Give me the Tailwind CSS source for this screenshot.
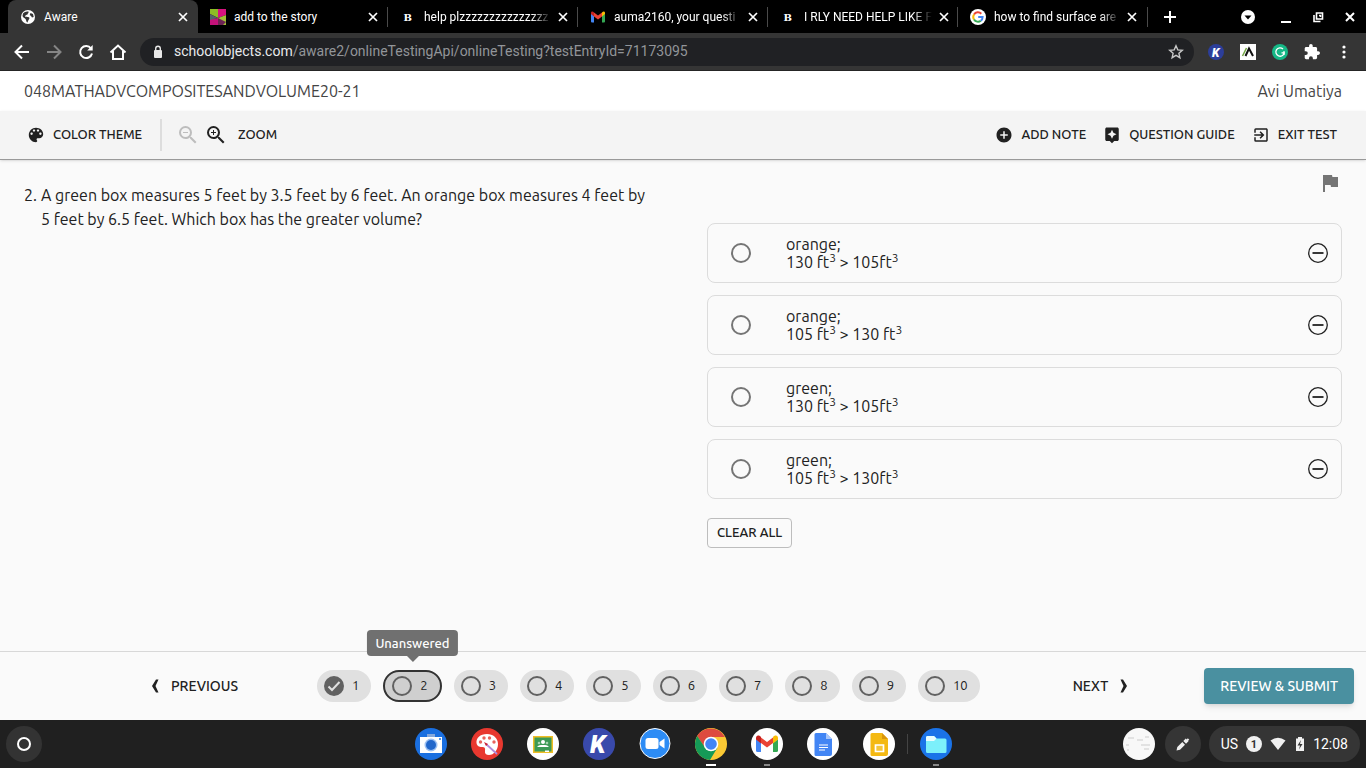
<!DOCTYPE html>
<html lang="en">
    <head>
        <meta charset="utf-8">
        <title>Aware</title>
        <script src="https://cdn.jsdelivr.net/npm/@tailwindcss/browser@4"></script>
    </head>
    <body class="min-h-screen w-full flex flex-col bg-[#fafafa] text-[#212121] font-['Ubuntu','Noto_Sans',sans-serif]">

        <!-- browser chrome -->
        <div class="bg-black text-white font-['Roboto',sans-serif]">
            <div class="flex items-center h-[33px] pl-2 text-[12px]">
                <div class="flex-1 max-w-[190px] h-full flex items-center pl-3 pr-[7px] gap-2 bg-[#353535] rounded-t-lg">
                    <svg class="size-4 shrink-0" viewBox="0 0 16 16"><circle cx="8" cy="8" r="7" fill="#fff"/><path d="M3 4.500C5 2.500 7 2.500 8.500 2.500 9 4 7.500 4.500 7.500 5.500 6.500 6 5 6 5 7.500 6 8 9 7.500 9.500 9 9.500 10 8 11 7.500 13.500 6 13 6.500 11 5.500 10 4.500 9 3 8.500 2.500 7ZM10.500 4 13 5 13.700 8 12 8.500 11 7 9.700 6Z" fill="#353535"/></svg>
                    <span class="flex-1 truncate">Aware</span>
                    <button aria-label="Close tab"><svg class="size-4" viewBox="0 0 16 16" stroke="#fff" stroke-width="1.700"><path d="M4 4l8 8M12 4l-8 8"/></svg></button>
                </div>
                <div class="flex-1 max-w-[190px] h-5 flex items-center pl-3 pr-1.5 gap-2 border-r border-[#4a4a4a]">
                    <svg class="size-4 shrink-0" viewBox="0 0 16 16"><path d="M0 0h8v9L0 5z" fill="#8dbb25"/><path d="M8 0h8v6L8 9z" fill="#d6127f"/><path d="M0 10l8-1v7H0z" fill="#c4127a"/><path d="M0 5l8 4-8 2z" fill="#55606a"/><path d="M8 9l8-3v10H8z" fill="#a0bf35"/><path d="M8 9l8 4-3 3H8z" fill="#6d2454"/></svg>
                    <span class="flex-1 whitespace-nowrap">add to the story</span>
                    <button aria-label="Close tab"><svg class="size-4" viewBox="0 0 16 16" stroke="#fff" stroke-width="1.700"><path d="M4 4l8 8M12 4l-8 8"/></svg></button>
                </div>
                <div class="flex-1 max-w-[190px] h-5 flex items-center pl-3 pr-1.5 gap-2 border-r border-[#4a4a4a]">
                    <svg class="size-4 shrink-0" viewBox="0 0 16 16"><text x="3.500" y="12" font-family="DejaVu Serif" font-size="10" font-weight="700" fill="#fff">B</text></svg>
                    <span class="flex-1 whitespace-nowrap mask-r-from-85%">help plzzzzzzzzzzzzzzz</span>
                    <button aria-label="Close tab" class="-ml-1"><svg class="size-4" viewBox="0 0 16 16" stroke="#fff" stroke-width="1.700"><path d="M4 4l8 8M12 4l-8 8"/></svg></button>
                </div>
                <div class="flex-1 max-w-[190px] h-5 flex items-center pl-3 pr-1.5 gap-2 border-r border-[#4a4a4a]">
                    <svg class="size-4 shrink-0" viewBox="0 0 16 16"><path d="M1 4.500l3 2.300V13.500H2a1 1 0 0 1-1-1z" fill="#4285f4"/><path d="M15 4.500l-3 2.300v6.700h2a1 1 0 0 0 1-1z" fill="#34a853"/><path d="M4 3.500l4 3 4-3v4l-4 3-4-3z" fill="#ea4335"/><path d="M1 5V4c0-1.500 1.700-2 3-.5v4z" fill="#c5221f"/><path d="M15 5V4c0-1.500-1.700-2-3-.5v4z" fill="#fbbc04"/></svg>
                    <span class="flex-1 whitespace-nowrap mask-r-from-85%">auma2160, your questi</span>
                    <button aria-label="Close tab" class="-ml-1"><svg class="size-4" viewBox="0 0 16 16" stroke="#fff" stroke-width="1.700"><path d="M4 4l8 8M12 4l-8 8"/></svg></button>
                </div>
                <div class="flex-1 max-w-[190px] h-5 flex items-center pl-3 pr-1.5 gap-2 border-r border-[#4a4a4a]">
                    <svg class="size-4 shrink-0" viewBox="0 0 16 16"><text x="3.500" y="12" font-family="DejaVu Serif" font-size="10" font-weight="700" fill="#fff">B</text></svg>
                    <span class="flex-1 whitespace-nowrap mask-r-from-85%">I RLY NEED HELP LIKE F</span>
                    <button aria-label="Close tab" class="-ml-1"><svg class="size-4" viewBox="0 0 16 16" stroke="#fff" stroke-width="1.700"><path d="M4 4l8 8M12 4l-8 8"/></svg></button>
                </div>
                <div class="flex-1 max-w-[190px] h-5 flex items-center pl-3 pr-[7px] gap-2 border-r border-[#4a4a4a]">
                    <svg class="size-4 shrink-0" viewBox="0 0 16 16" fill="none" stroke-width="2"><circle cx="8" cy="8" r="8" fill="#fff"/><path d="M4 5.500A4.600 4.600 0 0 1 11.300 4.800" stroke="#ea4335"/><path d="M4 5.500a4.700 4.700 0 0 0 0 5" stroke="#fbbc05"/><path d="M4 10.500a4.600 4.600 0 0 0 6.800 1.200" stroke="#34a853"/><path d="M10.800 11.700A4.600 4.600 0 0 0 12.600 8H8.200" stroke="#4285f4"/></svg>
                    <span class="flex-1 whitespace-nowrap mask-r-from-85%">how to find surface are</span>
                    <button aria-label="Close tab" class="-ml-1"><svg class="size-4" viewBox="0 0 16 16" stroke="#fff" stroke-width="1.700"><path d="M4 4l8 8M12 4l-8 8"/></svg></button>
                </div>
                <button class="ml-3.5" aria-label="New tab"><svg class="size-4" viewBox="0 0 16 16" stroke="#fff" stroke-width="2"><path d="M8 2v12M2 8h12"/></svg></button>
                <div class="ml-auto flex items-center gap-5 pr-2">
                    <button aria-label="Search tabs"><svg class="size-4" viewBox="0 0 16 16"><circle cx="8" cy="8" r="7" fill="#fff"/><path d="M4.500 6.500h7L8 10.500z" fill="#000"/></svg></button>
                    <button class="ml-0.5" aria-label="Minimize"><svg class="size-4" viewBox="0 0 16 16"><path d="M3 12h10v2H3z" fill="#fff"/></svg></button>
                    <button class="-ml-1" aria-label="Restore"><svg class="size-4" viewBox="0 0 16 16" fill="none" stroke="#fff" stroke-width="1.600"><path d="M6.500 4h6v6h-6z"/><path d="M4 6v6.500h6.500"/><path d="M9 6.500h1.500V8"/></svg></button>
                    <button class="-ml-1" aria-label="Close window"><svg class="size-4" viewBox="0 0 16 16" stroke="#fff" stroke-width="2"><path d="M4 4l8 8M12 4l-8 8"/></svg></button>
                </div>
            </div>
            <div class="flex items-center h-[38px] bg-[#353535] border-b border-[#252525] pl-3 pr-3.5">
                <div class="flex items-center gap-3 mr-3">
                    <button aria-label="Back"><svg class="size-5" viewBox="0 0 20 20" fill="none" stroke="#fff" stroke-width="2"><path d="M17 10H4M10 3.500L3.500 10l6.500 6.500"/></svg></button>
                    <button aria-label="Forward"><svg class="size-5" viewBox="0 0 20 20" fill="none" stroke="#858585" stroke-width="2"><path d="M3 10h13M10 3.500l6.500 6.500-6.500 6.500"/></svg></button>
                    <button aria-label="Reload"><svg class="size-5" viewBox="0 0 20 20" fill="none" stroke="#fff" stroke-width="2"><path d="M15 6.500A6 6 0 1 0 16 11.500"/><path d="M16.700 3v5.500h-5.500z" fill="#fff" stroke="none"/></svg></button>
                    <button aria-label="Home"><svg class="size-5" viewBox="0 0 20 20" fill="none" stroke="#fff" stroke-width="2"><path d="M2.500 10.500L10 3.500l7.500 7M5 9v8h10V9"/></svg></button>
                </div>
                <div class="flex-1 flex items-center h-7 rounded-full bg-[#202124] pl-3 pr-2.5 text-[14px]">
                    <svg class="w-3 h-4 mr-2.5" viewBox="0 0 12 16"><rect x="2" y="6" width="8" height="8" rx="1" fill="#e8e8e8"/><path d="M3.700 6V4.500a2.300 2.300 0 0 1 4.600 0V6" fill="none" stroke="#e8e8e8" stroke-width="1.400"/></svg>
                    <span class="text-[#e8eaed]">schoolobjects.com<span class="text-[#929599]">/aware2/onlineTestingApi/onlineTesting?testEntryId=71173095</span></span>
                    <button class="ml-auto" aria-label="Bookmark"><svg class="size-4" viewBox="0 0 16 16" fill="none" stroke="#c8c8c8" stroke-width="1.400"><path d="M8 1.800l1.800 4.100 4.500.4-3.400 3 1 4.400L8 11.400l-3.900 2.300 1-4.400-3.400-3 4.500-.4z"/></svg></button>
                </div>
                <div class="flex items-center gap-4 ml-3.5">
                    <button aria-label="Kami"><svg class="size-4" viewBox="0 0 16 16"><circle cx="8" cy="8" r="8" fill="#2c3e9a"/><text x="4" y="12.500" font-family="Roboto" font-size="12" font-weight="900" font-style="italic" fill="#fff">K</text></svg></button>
                    <button aria-label="Reader"><svg class="size-4" viewBox="0 0 16 16" fill="none"><path d="M0 0h16v16H0z" fill="#fff"/><path d="M2.500 12L6.500 4" stroke="#75a845" stroke-width="1.500"/><path d="M5.500 12L9 4.500l4 7.500" stroke="#111" stroke-width="2"/></svg></button>
                    <button aria-label="Grammarly"><svg class="size-4" viewBox="0 0 16 16" fill="none"><circle cx="8" cy="8" r="8" fill="#15b886"/><path d="M11 5A4.200 4.200 0 1 0 12.200 8.800H9.500" stroke="#fff" stroke-width="1.300"/><path d="M12 7v4" stroke="#fff" stroke-width="1.200"/></svg></button>
                    <button aria-label="Extensions"><svg class="size-4" viewBox="1 1 22 22" fill="#fff"><path d="M20.500 11H19V7c0-1.100-.9-2-2-2h-4V3.500a2.500 2.500 0 0 0-5 0V5H4c-1.100 0-2 .9-2 2v3.800h1.500a2.700 2.700 0 0 1 0 5.400H2V20c0 1.100.9 2 2 2h3.800v-1.500a2.700 2.700 0 0 1 5.400 0V22H17c1.100 0 2-.9 2-2v-4h1.500a2.500 2.500 0 0 0 0-5z"/></svg></button>
                    <button aria-label="Menu"><svg class="size-4" viewBox="0 0 16 16" fill="#fff"><circle cx="8" cy="3" r="1.600"/><circle cx="8" cy="8" r="1.600"/><circle cx="8" cy="13" r="1.600"/></svg></button>
                </div>
            </div>
        </div>

        <header>
            <div class="flex items-center justify-between h-10 px-6 bg-white text-[16px] text-[#444]">
                <h1>048MATHADVCOMPOSITESANDVOLUME20-21</h1>
                <span>Avi Umatiya</span>
            </div>
            <div class="flex items-center h-[49px] pl-7 pr-[29px] bg-[#f4f4f4] border-b border-[#999] shadow-sm text-[13px] font-medium">
                <button class="flex items-center gap-[9px]">
                    <svg class="size-4" viewBox="2 2 20 20" fill="#212121"><path d="M12 3c-4.970 0-9 4.030-9 9s4.030 9 9 9c.83 0 1.500-.67 1.500-1.500 0-.39-.15-.74-.39-1.010-.23-.26-.38-.61-.38-.99 0-.83.67-1.500 1.500-1.500H16c2.760 0 5-2.240 5-5 0-4.420-4.030-8-9-8zm-5.500 9c-.83 0-1.500-.67-1.500-1.500S5.670 9 6.500 9 8 9.670 8 10.500 7.330 12 6.500 12zm3-4C8.670 8 8 7.330 8 6.500S8.670 5 9.500 5s1.500.67 1.500 1.500S10.330 8 9.500 8zm5 0c-.83 0-1.500-.67-1.500-1.500S13.670 5 14.500 5s1.500.67 1.500 1.500S15.330 8 14.500 8zm3 4c-.83 0-1.500-.67-1.500-1.500S16.670 9 17.500 9s1.500.67 1.500 1.500-.67 1.500-1.500 1.500z"/></svg>
                    COLOR THEME
                </button>
                <div class="w-0.5 h-8 ml-[18px] mr-3.5 bg-[#ddd]"></div>
                <button aria-label="Zoom out" disabled><svg class="size-6" viewBox="0 0 24 24" fill="#bdbdbd"><path d="M15.500 14h-.79l-.28-.27A6.471 6.471 0 0 0 16 9.500 6.500 6.500 0 1 0 9.500 16c1.610 0 3.090-.59 4.230-1.570l.27.28v.79l5 4.990L20.490 19l-4.990-5zm-6 0C7.010 14 5 11.990 5 9.500S7.010 5 9.500 5 14 7.010 14 9.500 11.990 14 9.500 14zM7 9h5v1H7z"/></svg></button>
                <button class="flex items-center gap-2.5 ml-1">
                    <svg class="size-6" viewBox="0 0 24 24" fill="#212121"><path d="M15.500 14h-.79l-.28-.27A6.471 6.471 0 0 0 16 9.500 6.500 6.500 0 1 0 9.500 16c1.610 0 3.090-.59 4.230-1.570l.27.28v.79l5 4.990L20.490 19l-4.990-5zm-6 0C7.010 14 5 11.990 5 9.500S7.010 5 9.500 5 14 7.010 14 9.500 11.990 14 9.500 14zm2.500-4h-2v2H9v-2H7V9h2V7h1v2h2v1z"/></svg>
                    ZOOM
                </button>
                <div class="ml-auto flex items-center gap-[17px]">
                    <button class="flex items-center gap-2">
                        <svg class="size-[18px]" viewBox="0 0 24 24" fill="#212121"><path d="M12 2C6.480 2 2 6.480 2 12s4.480 10 10 10 10-4.480 10-10S17.520 2 12 2zm5 11h-4v4h-2v-4H7v-2h4V7h2v4h4v2z"/></svg>
                        ADD NOTE
                    </button>
                    <button class="flex items-center gap-2">
                        <svg class="size-[18px]" viewBox="0 0 24 24" fill="#212121"><path d="M19 2H5c-1.100 0-2 .9-2 2v14c0 1.100.9 2 2 2h4l3 3 3-3h4c1.100 0 2-.9 2-2V4c0-1.100-.9-2-2-2zm-5.120 10.880L12 17l-1.880-4.120L6 11l4.120-1.880L12 5l1.880 4.120L18 11l-4.120 1.880z"/></svg>
                        QUESTION GUIDE
                    </button>
                    <button class="flex items-center gap-2">
                        <svg class="size-[18px]" viewBox="0 0 24 24" fill="#212121"><path d="M10.090 15.590L11.500 17l5-5-5-5-1.410 1.410L12.670 11H3v2h9.670l-2.580 2.590zM19 3H5a2 2 0 0 0-2 2v4h2V5h14v14H5v-4H3v4a2 2 0 0 0 2 2h14c1.100 0 2-.9 2-2V5c0-1.100-.9-2-2-2z"/></svg>
                        EXIT TEST
                    </button>
                </div>
            </div>
        </header>

        <main class="flex-1 grid grid-cols-2 gap-12 px-6 pt-[11px]">
            <div class="flex gap-1 pt-3 pr-2 text-[16px] leading-6">
                <span>2.</span>
                <p>A green box measures 5 feet by 3.5 feet by 6 feet. An orange box measures 4 feet by 5 feet by 6.5 feet. Which box has the greater volume?</p>
            </div>
            <form>
                <div class="flex justify-end h-[52px]">
                    <button type="button" class="h-6" aria-label="Flag question"><svg class="size-6" viewBox="0 0 24 24" fill="#757575"><path d="M14.400 6L14 4H5v17h2v-7h5.600l.4 2h7V6z"/></svg></button>
                </div>
                <div class="flex flex-col gap-3 text-[16px] leading-[18px]">
                    <div class="flex items-center h-[60px] pl-[23px] pr-3 border border-[#dcdcdc] rounded-lg">
                        <input type="radio" name="answer" id="a1" class="appearance-none size-5 shrink-0 rounded-full border-2 border-[#757575]">
                        <label for="a1" class="flex-1 pl-[35px] [&_sup]:text-[12px] [&_sup]:leading-none">orange;<br>130 ft<sup>3</sup> &gt; 105ft<sup>3</sup></label>
                        <button type="button" aria-label="Eliminate answer"><svg class="size-[22px]" viewBox="0 0 22 22" fill="none" stroke="#212121"><circle cx="11" cy="11" r="9.300" stroke-width="1.300"/><path d="M5.500 11h11" stroke-width="1.800"/></svg></button>
                    </div>
                    <div class="flex items-center h-[60px] pl-[23px] pr-3 border border-[#dcdcdc] rounded-lg">
                        <input type="radio" name="answer" id="a2" class="appearance-none size-5 shrink-0 rounded-full border-2 border-[#757575]">
                        <label for="a2" class="flex-1 pl-[35px] [&_sup]:text-[12px] [&_sup]:leading-none">orange;<br>105 ft<sup>3</sup> &gt; 130 ft<sup>3</sup></label>
                        <button type="button" aria-label="Eliminate answer"><svg class="size-[22px]" viewBox="0 0 22 22" fill="none" stroke="#212121"><circle cx="11" cy="11" r="9.300" stroke-width="1.300"/><path d="M5.500 11h11" stroke-width="1.800"/></svg></button>
                    </div>
                    <div class="flex items-center h-[60px] pl-[23px] pr-3 border border-[#dcdcdc] rounded-lg">
                        <input type="radio" name="answer" id="a3" class="appearance-none size-5 shrink-0 rounded-full border-2 border-[#757575]">
                        <label for="a3" class="flex-1 pl-[35px] [&_sup]:text-[12px] [&_sup]:leading-none">green;<br>130 ft<sup>3</sup> &gt; 105ft<sup>3</sup></label>
                        <button type="button" aria-label="Eliminate answer"><svg class="size-[22px]" viewBox="0 0 22 22" fill="none" stroke="#212121"><circle cx="11" cy="11" r="9.300" stroke-width="1.300"/><path d="M5.500 11h11" stroke-width="1.800"/></svg></button>
                    </div>
                    <div class="flex items-center h-[60px] pl-[23px] pr-3 border border-[#dcdcdc] rounded-lg">
                        <input type="radio" name="answer" id="a4" class="appearance-none size-5 shrink-0 rounded-full border-2 border-[#757575]">
                        <label for="a4" class="flex-1 pl-[35px] [&_sup]:text-[12px] [&_sup]:leading-none">green;<br>105 ft<sup>3</sup> &gt; 130ft<sup>3</sup></label>
                        <button type="button" aria-label="Eliminate answer"><svg class="size-[22px]" viewBox="0 0 22 22" fill="none" stroke="#212121"><circle cx="11" cy="11" r="9.300" stroke-width="1.300"/><path d="M5.500 11h11" stroke-width="1.800"/></svg></button>
                    </div>
                </div>
                <button type="reset" class="mt-[19px] h-[30px] px-[9px] border border-[#bdbdbd] rounded-sm text-[13px] font-medium">CLEAR ALL</button>
            </form>
        </main>

        <footer class="flex items-center h-[69px] pl-[150px] pr-3 border-t border-[#d8d8d8] text-[13px]">
            <button class="flex items-center gap-[11px] text-[14px] font-medium">
                <svg class="w-2.5 h-4" viewBox="0 0 10 16" fill="#212121"><path d="M8.500 1.500H6L2 8l4 6.500h2.500L5.500 8z"/></svg>
                PREVIOUS
            </button>
            <nav class="flex gap-3 mx-auto pr-3.5">
                <button class="flex items-center gap-2 h-8 pl-[7px] pr-3 rounded-full bg-[#e0e0e0]"><svg class="size-5" viewBox="0 0 20 20"><circle cx="10" cy="10" r="10" fill="#616161"/><path d="M4.500 10.500l3.500 3.500 7.500-8" fill="none" stroke="#e0e0e0" stroke-width="2"/></svg>1</button>
                <button class="relative flex items-center gap-2 h-8 pl-[7px] pr-3 rounded-full bg-[#cfcfcf] border-2 border-[#333]">
                    <span class="size-5 rounded-full border-2 border-[#616161]"></span>2
                    <span class="absolute bottom-full left-1/2 -translate-x-1/2 mb-4 px-2 py-1 rounded-sm bg-[#707070] text-white text-[13px] leading-[18px] font-medium">Unanswered<svg class="absolute top-full left-1/2 -translate-x-1/2 w-3 h-1.5" viewBox="0 0 12 6"><path d="M0 0h12L6 6z" fill="#707070"/></svg></span>
                </button>
                <button class="flex items-center gap-2 h-8 pl-[7px] pr-3 rounded-full bg-[#e0e0e0]"><span class="size-5 rounded-full border-2 border-[#616161]"></span>3</button>
                <button class="flex items-center gap-2 h-8 pl-[7px] pr-3 rounded-full bg-[#e0e0e0]"><span class="size-5 rounded-full border-2 border-[#616161]"></span>4</button>
                <button class="flex items-center gap-2 h-8 pl-[7px] pr-3 rounded-full bg-[#e0e0e0]"><span class="size-5 rounded-full border-2 border-[#616161]"></span>5</button>
                <button class="flex items-center gap-2 h-8 pl-[7px] pr-3 rounded-full bg-[#e0e0e0]"><span class="size-5 rounded-full border-2 border-[#616161]"></span>6</button>
                <button class="flex items-center gap-2 h-8 pl-[7px] pr-3 rounded-full bg-[#e0e0e0]"><span class="size-5 rounded-full border-2 border-[#616161]"></span>7</button>
                <button class="flex items-center gap-2 h-8 pl-[7px] pr-3 rounded-full bg-[#e0e0e0]"><span class="size-5 rounded-full border-2 border-[#616161]"></span>8</button>
                <button class="flex items-center gap-2 h-8 pl-[7px] pr-3 rounded-full bg-[#e0e0e0]"><span class="size-5 rounded-full border-2 border-[#616161]"></span>9</button>
                <button class="flex items-center gap-2 h-8 pl-[7px] pr-3 rounded-full bg-[#e0e0e0]"><span class="size-5 rounded-full border-2 border-[#616161]"></span>10</button>
            </nav>
            <button class="flex items-center gap-[11px] mr-[75px] text-[14px] font-medium">
                NEXT
                <svg class="w-2.5 h-4" viewBox="0 0 10 16" fill="#212121"><path d="M1.500 1.500H4L8 8l-4 6.500H1.500L4.500 8z"/></svg>
            </button>
            <button class="h-9 px-4 rounded-sm bg-[#4a90a0] text-white text-[14px] font-medium shadow-md">REVIEW &amp; SUBMIT</button>
        </footer>

        <!-- shelf -->
        <div class="grid grid-cols-[1fr_auto_1fr] items-center h-12 px-1.5 bg-[#202020] text-white font-['Roboto',sans-serif]">
            <button aria-label="Launcher" class="size-9 rounded-full bg-[#333] flex items-center justify-center"><span class="size-3.5 rounded-full border-2 border-white"></span></button>
            <div class="flex items-center gap-6">
                <button aria-label="Camera"><svg class="size-8" viewBox="0 0 32 32"><circle cx="16" cy="16" r="16" fill="#1a6fe0"/><path d="M12 6h8v4h-8z" fill="#86a9dc"/><path d="M5 9h22v16H5z" fill="#fff"/><circle cx="16" cy="17" r="6.500" fill="#9cc0f3"/><circle cx="16" cy="17" r="5" fill="#2267cb"/><circle cx="25" cy="11" r="1" fill="#1a73e8"/></svg></button>
                <button aria-label="Canvas"><svg class="size-8" viewBox="0 0 32 32"><circle cx="16" cy="16" r="16" fill="#e8382f"/><path d="M16 6C9 6 5 10 5.500 15c.5 4 4 4 6 4s3 1 2.500 3.500c-.5 3 1 4.500 4 4.500 5 0 9-5 9-11S22 6 16 6z" fill="#fff"/><g fill="#e8635c"><circle cx="9.500" cy="14" r="1.700"/><circle cx="13" cy="10" r="1.700"/><circle cx="18.500" cy="10" r="1.700"/><circle cx="23" cy="14" r="1.700"/></g><path d="M15 16l11 10" stroke="#b18ad8" stroke-width="1.800"/><path d="M13 14l4 2-2 2z" fill="#c23"/></svg></button>
                <button aria-label="Classroom"><svg class="size-8" viewBox="0 0 32 32"><circle cx="16" cy="16" r="16" fill="#fff"/><path d="M6 8h20v17H6z" fill="#f0bd25"/><path d="M7.500 9.500h17v14h-17z" fill="#3c9a55"/><g fill="#fff"><circle cx="16" cy="14" r="2"/><circle cx="12" cy="15" r="1.300" fill="#a5d3ae"/><circle cx="20" cy="15" r="1.300" fill="#a5d3ae"/><path d="M10 19c2-2 3-2 6-2s4 0 6 2zM18 22.500h4v1.500h-4z"/></g></svg></button>
                <button aria-label="Kami"><svg class="size-8" viewBox="0 0 32 32"><circle cx="16" cy="16" r="16" fill="#3949ab"/><text x="7" y="25" font-family="Roboto" font-size="25" font-weight="900" font-style="italic" fill="#fff">K</text></svg></button>
                <button aria-label="Zoom"><svg class="size-8" viewBox="0 0 32 32"><circle cx="16" cy="15.500" r="15" fill="#2d8cf5" stroke="#fff"/><rect x="6.500" y="10" width="13" height="11" rx="2.500" fill="#fff"/><path d="M20.500 14l5-3.500v10l-5-3.500z" fill="#fff"/></svg></button>
                <button aria-label="Chrome" class="relative"><svg class="size-8" viewBox="0 0 32 32"><circle cx="16" cy="16" r="16" fill="#fbc934"/><path d="M2.140 8A16 16 0 0 1 29.860 9H16v7l-6 4z" fill="#dd4b3e"/><path d="M2.140 8A16 16 0 0 0 15 32l7.500-12.500L16 22l-6-2.500z" fill="#159a57"/><circle cx="16" cy="16" r="7.300" fill="#fff"/><circle cx="16" cy="16" r="5.800" fill="#4285f4"/></svg><span class="absolute top-full left-1/2 -translate-x-1/2 mt-1 w-2.5 h-0.5 bg-white"></span></button>
                <button aria-label="Gmail" class="relative"><svg class="size-8" viewBox="0 0 32 32"><circle cx="16" cy="16" r="16" fill="#fff"/><path d="M5 11l5 4v9H6.500A1.500 1.500 0 0 1 5 22.500z" fill="#4285f4"/><path d="M27 11l-5 4v9h3.500a1.500 1.500 0 0 0 1.500-1.500z" fill="#34a853"/><path d="M10 9.500l6 4.500 6-4.500V15l-6 4.500-6-4.500z" fill="#ea4335"/><path d="M5 11.500V10c0-2.500 2.500-3.500 5-1v6.500z" fill="#c5221f"/><path d="M27 11.500V10c0-2.500-2.500-3.500-5-1v6.500z" fill="#fbbc04"/></svg><span class="absolute top-full left-1/2 -translate-x-1/2 mt-1 w-1.5 h-0.5 bg-[#888]"></span></button>
                <button aria-label="Docs"><svg class="size-8" viewBox="0 0 32 32"><circle cx="16" cy="16" r="16" fill="#fff"/><path d="M9 5h10l6 6v15a2 2 0 0 1-2 2H9a1.500 1.500 0 0 1-1.500-1.500v-20A1.500 1.500 0 0 1 9 5z" fill="#4285f4"/><path d="M19 5l6 6h-6z" fill="#a7c5fa"/><path d="M12 17h9M12 19.500h9M12 22h6" stroke="#fff" stroke-width="1.200"/></svg></button>
                <button aria-label="Slides"><svg class="size-8" viewBox="0 0 32 32"><circle cx="16" cy="16" r="16" fill="#fff"/><path d="M9 5h10l6 6v15a2 2 0 0 1-2 2H9a1.500 1.500 0 0 1-1.500-1.500v-20A1.500 1.500 0 0 1 9 5z" fill="#f4b912"/><path d="M19 5l6 6h-6z" fill="#d9960c"/><path d="M12.500 17h8v6.500h-8z" fill="#f4c63a" stroke="#fff" stroke-width="1.700"/></svg></button>
                <div class="w-px h-5 -mx-3 bg-[#444]"></div>
                <button aria-label="Files" class="relative"><svg class="size-8" viewBox="0 0 32 32"><circle cx="16" cy="16" r="16" fill="#1a73e8"/><path d="M6 9.500A1.500 1.500 0 0 1 7.500 8H14l2.500 2.500H25a1.500 1.500 0 0 1 1.500 1.500v11.500A1.500 1.500 0 0 1 25 25H7.500A1.500 1.500 0 0 1 6 23.500z" fill="#7cf0fb"/><path d="M6 9.500A1.500 1.500 0 0 1 7.500 8H14l2.500 2.500L14 13H6z" fill="#e8feff"/></svg><span class="absolute top-full left-1/2 -translate-x-1/2 mt-1 w-1.5 h-0.5 bg-[#888]"></span></button>
            </div>
            <div class="flex items-center justify-end gap-2">
                <button aria-label="Recent screenshot" class="mr-0.5"><svg class="size-8" viewBox="0 0 32 32"><circle cx="16" cy="16" r="16" fill="#f8f8f8"/><path d="M5 10h6M14 12h6M22 9h4M3 17h3M18 17h9M4 22h2M21 21h5" stroke="#ccc"/></svg></button>
                <button aria-label="Stylus" class="size-9 rounded-full bg-[#353535] flex items-center justify-center"><svg class="size-4" viewBox="0 0 16 16" fill="#eee"><path d="M1.500 14.500l.8-3.500 5-5 2.700 2.700-5 5zM8.300 5l2.500-2.500 1 1 1-1.200 1.500 1.500-1.200 1 .4.400L11 7.700z"/></svg></button>
                <button class="flex items-center h-9 px-3 rounded-full bg-[#353535] text-[14px]">
                    US
                    <svg class="size-4 ml-2" viewBox="0 0 16 16"><circle cx="8" cy="8" r="8" fill="#f1f1f1"/><text x="8" y="12" text-anchor="middle" font-family="Roboto" font-size="11" font-weight="700" fill="#333">1</text></svg>
                    <svg class="size-4 ml-2" viewBox="0 0 16 16"><path d="M.5 4.500Q8-1 15.500 4.500L8 14z" fill="#f1f1f1"/></svg>
                    <svg class="w-3 h-4 ml-2" viewBox="0 0 12 16"><path d="M4 1h4v1.500h2V15H2V2.500h2z" fill="#f1f1f1"/><path d="M7 4L3.500 9.500H6L5 13.500 8.500 8H6z" fill="#353535"/></svg>
                    <span class="ml-[7px]">12:08</span>
                </button>
            </div>
        </div>
    </body>
</html>
